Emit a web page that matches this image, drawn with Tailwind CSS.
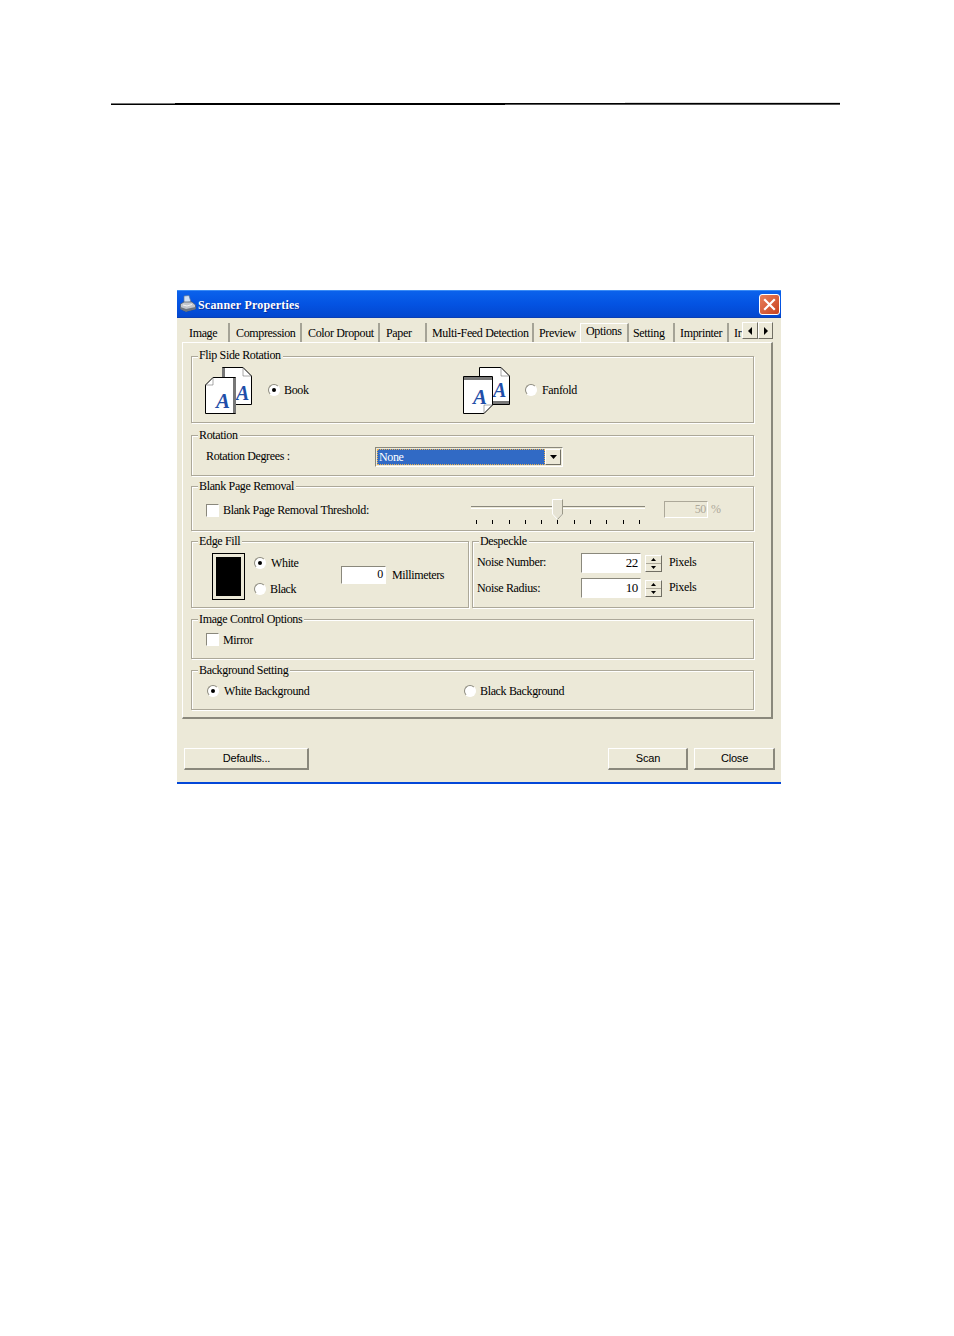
<!DOCTYPE html>
<html><head><meta charset="utf-8"><title>Scanner Properties</title>
<script src="https://cdn.jsdelivr.net/npm/@tailwindcss/browser@4"></script></head>
<body class="bg-white">
<div class="w-[954px] h-[1336px] overflow-hidden bg-white font-['Liberation_Serif',serif] text-[12px] leading-[14px] tracking-[-0.35px] text-black">
  <!-- page rule -->
  <div class="pt-[102px] pl-[111px] flex items-start">
    <div class="w-[64px] mt-[1px] h-[2px] border-t border-[#777] bg-black"></div>
    <div class="w-[330px] mt-[1px] h-[2px] bg-black"></div>
    <div class="w-[120px] mt-[1px] h-[2px] border-b border-[#555] bg-black"></div>
    <div class="w-[215px] h-[3px] border-t border-[#ddd] border-b border-b-[#555] bg-black"></div>
  </div>
  <!-- dialog -->
  <div class="ml-[177px] mt-[185px] w-[604px] h-[494px] bg-[#ece9d8] flex flex-col border-b-2 border-[#0347d8]">
    <!-- title -->
    <div class="h-[28px] shrink-0 flex items-center pl-[3px] pr-[1px] border-t border-[#3b8cf5] border-b border-b-[#0a3fb5] bg-gradient-to-b from-[#0b62ec] via-[#0453e2] to-[#0347cf]">
      <svg class="w-[16px] h-[18px] shrink-0" viewBox="0 0 16 18">
        <path d="M4 1 L9 0.5 L11 7 L4 8 Z" fill="#cfe0f5" stroke="#5f7696" stroke-width=".7"/>
        <path d="M.5 9 L4 7 L12 7 L15.500 10 L15.500 14 L6 16.500 L.5 14 Z" fill="#c2c6cc" stroke="#4e5662" stroke-width=".7"/>
        <path d="M.5 12 L6 14 L15.500 12 L15.500 14 L6 16.500 L.5 14 Z" fill="#6d7580"/>
        <path d="M3 10 L7 11 L12 9.500" fill="none" stroke="#f4f4f4" stroke-width="1"/>
      </svg>
      <span class="ml-[2px] font-bold text-white text-[12px] tracking-[0.2px] [text-shadow:1px_1px_0_#0a2f9a] pt-[1px]">Scanner Properties</span>
      <div class="ml-auto w-[21px] h-[21px] rounded-[3px] border border-white bg-gradient-to-br from-[#e8805c] to-[#c8401c] flex items-center justify-center">
        <svg class="w-[13px] h-[13px]" viewBox="0 0 13 13"><path d="M2 2 L11 11 M11 2 L2 11" stroke="#fff" stroke-width="2.200" stroke-linecap="square"/></svg>
      </div>
    </div>
    <!-- tabs -->
    <div class="relative h-[24px] shrink-0 pl-[6px] pt-[5px] flex items-start">
      <div class="flex w-[559px] h-[19px] items-stretch">
        <div class="w-[47px] shrink-0 pl-[6px] pt-[3px] border-r-2 border-[#a5a396] whitespace-nowrap">Image</div>
        <div class="w-[72px] shrink-0 pl-[6px] pt-[3px] border-r-2 border-[#a5a396] whitespace-nowrap">Compression</div>
        <div class="w-[78px] shrink-0 pl-[6px] pt-[3px] border-r-2 border-[#a5a396] whitespace-nowrap">Color Dropout</div>
        <div class="w-[47px] shrink-0 pl-[6px] pt-[3px] border-r-2 border-[#a5a396] whitespace-nowrap">Paper</div>
        <div class="w-[107px] shrink-0 pl-[5px] pt-[3px] border-r-2 border-[#a5a396] whitespace-nowrap">Multi-Feed Detection</div>
        <div class="w-[46px] shrink-0 pl-[5px] pt-[3px] whitespace-nowrap">Preview</div>
        <div class="w-[49px] shrink-0 pl-[5px] border-t border-l border-white border-r-2 border-r-[#a5a396] whitespace-nowrap">Options</div>
        <div class="w-[46px] shrink-0 pl-[4px] pt-[3px] border-r-2 border-[#a5a396] whitespace-nowrap">Setting</div>
        <div class="w-[54px] shrink-0 pl-[5px] pt-[3px] border-r-2 border-[#a5a396] whitespace-nowrap">Imprinter</div>
        <div class="w-[13px] shrink-0 pl-[5px] pt-[3px] whitespace-nowrap">Ir</div>
      </div>
      <div class="flex h-[17px] -mt-[1px]">
        <div class="w-[16px] border border-white border-r-[#716f64] border-b-[#716f64] flex items-center justify-center"><svg class="w-[5px] h-[8px]" viewBox="0 0 5 8"><path d="M4 0 L0 4 L4 8 Z" fill="#000"/></svg></div>
        <div class="w-[15px] border border-white border-r-[#716f64] border-b-[#716f64] flex items-center justify-center"><svg class="w-[5px] h-[8px]" viewBox="0 0 5 8"><path d="M1 0 L5 4 L1 8 Z" fill="#000"/></svg></div>
      </div>
    </div>
    <!-- panel -->
    <div class="ml-[5px] w-[591px] h-[377px] shrink-0 border-t border-l border-white border-r-2 border-b-2 border-r-[#8a887c] border-b-[#8a887c] pl-[8px] pt-[13px] flex flex-col">

      <!-- Flip Side Rotation -->
      <div class="relative w-[563px] h-[67px] shrink-0 border border-[#aca899] shadow-[1px_1px_0_#fff,inset_1px_1px_0_#fff] grid grid-cols-[258px_1fr] items-start pl-[13px] pt-[10px]">
        <span class="absolute left-[6px] -top-[9px] bg-[#ece9d8] pl-[1px] pr-[2px]">Flip Side Rotation</span>
        <div class="flex items-center">
          <svg class="w-[48px] h-[48px] shrink-0" viewBox="0 0 48 48">
            <path d="M17.500 .5 H38 L46.500 9 V37.500 H17.500 Z" fill="#fff" stroke="#000"/><rect x="17" y="1" width="3" height="36" fill="#777"/><path d="M38 .5 V9 H46.500" fill="none" stroke="#555" stroke-dasharray="1 1"/>
            <text x="31" y="33" font-family="Liberation Serif" font-style="italic" font-weight="bold" font-size="20" fill="#1f4ea8">A</text>
            <path d="M.5 18 L8 10.500 H30.500 V46.500 H.5 Z" fill="#fff" stroke="#000"/><rect x="28" y="11" width="3" height="35" fill="#777"/><path d="M8 10.500 V18 H.5" fill="none" stroke="#555" stroke-dasharray="1 1"/>
            <text x="11" y="41" font-family="Liberation Serif" font-style="italic" font-weight="bold" font-size="21" fill="#1f4ea8">A</text>
          </svg>
          <span class="ml-[15px] mb-[2px] w-[12px] h-[12px] rounded-full border border-[#8d8b7f] border-r-white border-b-white bg-white flex items-center justify-center"><span class="w-[4px] h-[4px] rounded-full bg-black"></span></span>
          <span class="ml-[4px] mb-[2px]">Book</span>
        </div>
        <div class="flex items-center">
          <svg class="w-[48px] h-[48px] shrink-0" viewBox="0 0 48 48">
            <path d="M16.500 .5 H38 L46.500 9 V37.500 H16.500 Z" fill="#fff" stroke="#000"/><rect x="17" y="34" width="29" height="3" fill="#777"/><path d="M38 .5 V9 H46.500" fill="none" stroke="#555" stroke-dasharray="1 1"/>
            <text x="30" y="30" font-family="Liberation Serif" font-style="italic" font-weight="bold" font-size="20" fill="#1f4ea8">A</text>
            <path d="M.5 9.500 H29.500 V38 L21 46.500 H.5 Z" fill="#fff" stroke="#000"/><rect x="1" y="10" width="28" height="3" fill="#777"/><path d="M21 46.500 V38 H29.500" fill="none" stroke="#555" stroke-dasharray="1 1"/>
            <text x="10" y="37" font-family="Liberation Serif" font-style="italic" font-weight="bold" font-size="21" fill="#1f4ea8">A</text>
          </svg>
          <span class="ml-[14px] mb-[2px] w-[12px] h-[12px] rounded-full border border-[#8d8b7f] border-r-white border-b-white bg-white"></span>
          <span class="ml-[5px] mb-[2px]">Fanfold</span>
        </div>
      </div>

      <!-- Rotation -->
      <div class="relative mt-[12px] w-[563px] h-[41px] shrink-0 border border-[#aca899] shadow-[1px_1px_0_#fff,inset_1px_1px_0_#fff] flex items-start pl-[14px] pt-[11px]">
        <span class="absolute left-[6px] -top-[8px] bg-[#ece9d8] pl-[1px] pr-[2px]">Rotation</span>
        <span class="w-[169px] shrink-0 mt-[2px]">Rotation Degrees :</span>
        <div class="flex w-[188px] h-[20px] border border-[#8a887c] border-r-white border-b-white p-[1px] bg-[#ece9d8]">
          <div class="w-[168px] h-full bg-[#316ac5] text-white border border-dotted border-[#e8b050] pl-[1px] leading-[15px]">None</div>
          <div class="w-[16px] h-full border border-white border-r-[#716f64] border-b-[#716f64] flex items-center justify-center"><svg class="w-[7px] h-[4px]" viewBox="0 0 7 4"><path d="M0 0 H7 L3.500 4 Z" fill="#000"/></svg></div>
        </div>
      </div>

      <!-- Blank Page Removal -->
      <div class="relative mt-[10px] w-[563px] h-[45px] shrink-0 border border-[#aca899] shadow-[1px_1px_0_#fff,inset_1px_1px_0_#fff] flex items-start pl-[14px] pt-[12px]">
        <span class="absolute left-[6px] -top-[8px] bg-[#ece9d8] pl-[1px] pr-[2px]">Blank Page Removal</span>
        <div class="w-[265px] shrink-0 flex items-center h-[22px]">
          <span class="w-[13px] h-[13px] border border-[#8a887c] border-r-white border-b-white bg-white"></span>
          <span class="ml-[4px]">Blank Page Removal Threshold:</span>
        </div>
        <div class="relative w-[174px] shrink-0 h-[28px]">
          <div class="mt-[7px] h-[3px] border-t border-[#8a887c] border-b border-b-white bg-[#ece9d8]"></div>
          <svg class="absolute left-[81px] top-0 w-[11px] h-[21px]" viewBox="0 0 11 21"><path d="M.5 .5 H10.500 V15 L5.500 20.500 L.5 15 Z" fill="#e6e3d4" stroke="#fff"/><path d="M10.500 .5 V15 L5.500 20.500" fill="none" stroke="#9a9888"/></svg>
          <div class="mt-[11px] ml-[5px] w-[164px] flex justify-between">
            <i class="w-[1px] h-[4px] bg-black"></i><i class="w-[1px] h-[4px] bg-black"></i><i class="w-[1px] h-[4px] bg-black"></i><i class="w-[1px] h-[4px] bg-black"></i><i class="w-[1px] h-[4px] bg-black"></i><i class="w-[1px] h-[4px] bg-black"></i><i class="w-[1px] h-[4px] bg-black"></i><i class="w-[1px] h-[4px] bg-black"></i><i class="w-[1px] h-[4px] bg-black"></i><i class="w-[1px] h-[4px] bg-black"></i><i class="w-[1px] h-[4px] bg-black"></i>
          </div>
        </div>
        <div class="ml-[19px] mt-[2px] w-[44px] h-[17px] border border-[#aca899] border-r-white border-b-white text-right pr-[1px] text-[#aca899]">50</div>
        <span class="ml-[3px] mt-[3px] text-[#aca899]">%</span>
      </div>

      <!-- Edge Fill + Despeckle -->
      <div class="mt-[10px] flex gap-[3px] shrink-0 w-[563px]">
        <div class="relative w-[278px] h-[67px] shrink-0 border border-[#aca899] shadow-[1px_1px_0_#fff,inset_1px_1px_0_#fff] flex items-start pl-[20px] pt-[11px]">
          <span class="absolute left-[6px] -top-[8px] bg-[#ece9d8] pl-[1px] pr-[2px]">Edge Fill</span>
          <div class="w-[33px] h-[47px] shrink-0 border border-black p-[3px]"><div class="w-full h-full bg-black"></div></div>
          <div class="ml-[9px] w-[87px] shrink-0 flex flex-col gap-[12px] pt-[3px]">
            <div class="flex items-center"><span class="w-[12px] h-[12px] rounded-full border border-[#8d8b7f] border-r-white border-b-white bg-white flex items-center justify-center"><span class="w-[4px] h-[4px] rounded-full bg-black"></span></span><span class="ml-[5px]">White</span></div>
            <div class="flex items-center"><span class="w-[12px] h-[12px] rounded-full border border-[#8d8b7f] border-r-white border-b-white bg-white"></span><span class="ml-[4px]">Black</span></div>
          </div>
          <div class="mt-[13px] w-[45px] h-[18px] shrink-0 border border-[#8a887c] border-r-white border-b-white bg-white text-right pr-[2px]">0</div>
          <span class="ml-[6px] mt-[15px] whitespace-nowrap">Millimeters</span>
        </div>
        <div class="relative w-[282px] h-[67px] shrink-0 border border-[#aca899] shadow-[1px_1px_0_#fff,inset_1px_1px_0_#fff] flex flex-col gap-[5px] pl-[4px] pt-[11px]">
          <span class="absolute left-[6px] -top-[8px] bg-[#ece9d8] pl-[1px] pr-[2px]">Despeckle</span>
          <div class="flex items-start h-[20px]">
            <span class="w-[104px] shrink-0 mt-[2px]">Noise Number:</span>
            <div class="w-[60px] h-[20px] shrink-0 border border-[#8a887c] border-r-white border-b-white bg-white text-right pr-[2px] pt-[2px] text-[13px]">22</div>
            <div class="ml-[4px] mt-[2px] w-[17px] h-[17px] shrink-0 flex flex-col border border-white border-r-[#716f64] border-b-[#716f64]"><div class="h-1/2 border-b border-[#aca899] flex items-center justify-center"><svg class="w-[5px] h-[3px]" viewBox="0 0 5 3"><path d="M0 3 L2.500 0 L5 3 Z"/></svg></div><div class="h-1/2 flex items-center justify-center"><svg class="w-[5px] h-[3px]" viewBox="0 0 5 3"><path d="M0 0 H5 L2.500 3 Z"/></svg></div></div>
            <span class="ml-[7px] mt-[2px]">Pixels</span>
          </div>
          <div class="flex items-start h-[20px]">
            <span class="w-[104px] shrink-0 mt-[3px]">Noise Radius:</span>
            <div class="w-[60px] h-[20px] shrink-0 border border-[#8a887c] border-r-white border-b-white bg-white text-right pr-[2px] pt-[2px] text-[13px]">10</div>
            <div class="ml-[4px] mt-[2px] w-[17px] h-[17px] shrink-0 flex flex-col border border-white border-r-[#716f64] border-b-[#716f64]"><div class="h-1/2 border-b border-[#aca899] flex items-center justify-center"><svg class="w-[5px] h-[3px]" viewBox="0 0 5 3"><path d="M0 3 L2.500 0 L5 3 Z"/></svg></div><div class="h-1/2 flex items-center justify-center"><svg class="w-[5px] h-[3px]" viewBox="0 0 5 3"><path d="M0 0 H5 L2.500 3 Z"/></svg></div></div>
            <span class="ml-[7px] mt-[2px]">Pixels</span>
          </div>
        </div>
      </div>

      <!-- Image Control Options -->
      <div class="relative mt-[11px] w-[563px] h-[40px] shrink-0 border border-[#aca899] shadow-[1px_1px_0_#fff,inset_1px_1px_0_#fff] flex items-center pl-[14px] pt-[1px]">
        <span class="absolute left-[6px] -top-[8px] bg-[#ece9d8] pl-[1px] pr-[2px]">Image Control Options</span>
        <span class="w-[13px] h-[13px] border border-[#8a887c] border-r-white border-b-white bg-white"></span>
        <span class="ml-[4px]">Mirror</span>
      </div>

      <!-- Background Setting -->
      <div class="relative mt-[11px] w-[563px] h-[40px] shrink-0 border border-[#aca899] shadow-[1px_1px_0_#fff,inset_1px_1px_0_#fff] flex items-center pl-[15px] pt-[1px]">
        <span class="absolute left-[6px] -top-[8px] bg-[#ece9d8] pl-[1px] pr-[2px]">Background Setting</span>
        <div class="w-[257px] flex items-center"><span class="w-[12px] h-[12px] rounded-full border border-[#8d8b7f] border-r-white border-b-white bg-white flex items-center justify-center"><span class="w-[4px] h-[4px] rounded-full bg-black"></span></span><span class="ml-[5px]">White Background</span></div>
        <div class="flex items-center"><span class="w-[12px] h-[12px] rounded-full border border-[#8d8b7f] border-r-white border-b-white bg-white"></span><span class="ml-[4px]">Black Background</span></div>
      </div>
    </div>

    <!-- buttons -->
    <div class="mt-[29px] pl-[7px] flex font-['Liberation_Sans',sans-serif] text-[11px] tracking-[-0.2px]">
      <div class="w-[125px] h-[22px] pb-[2px] pl-[1px] border border-white border-r-2 border-b-2 border-r-[#8a887c] border-b-[#8a887c] flex items-center justify-center">Defaults...</div>
      <div class="ml-[299px] w-[80px] h-[22px] pb-[2px] pl-[1px] border border-white border-r-2 border-b-2 border-r-[#8a887c] border-b-[#8a887c] flex items-center justify-center">Scan</div>
      <div class="ml-[6px] w-[81px] h-[22px] pb-[2px] pl-[1px] border border-white border-r-2 border-b-2 border-r-[#8a887c] border-b-[#8a887c] flex items-center justify-center">Close</div>
    </div>
  </div>
</div>
</body></html>
